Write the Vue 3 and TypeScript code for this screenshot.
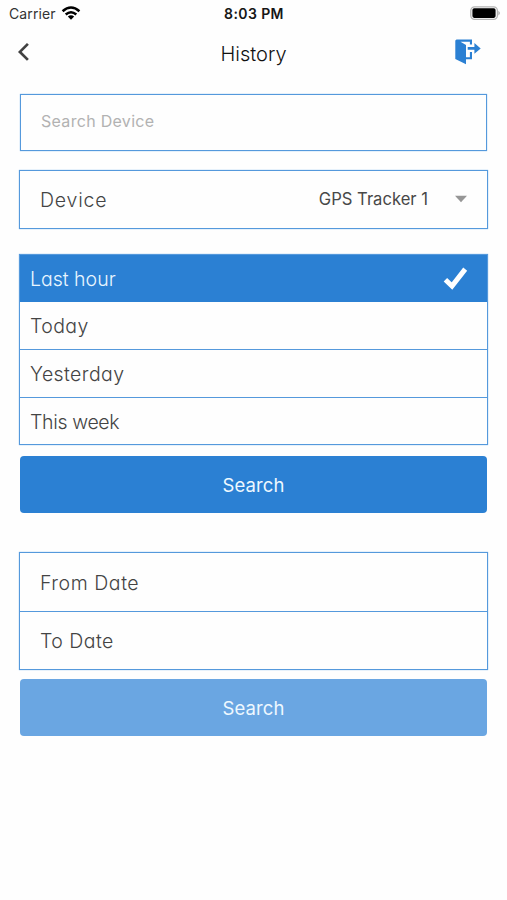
<script setup lang="ts">
import { ref } from 'vue'

interface Label {
  text: string
  tracking: number
}

const ranges: Label[] = [
  { text: 'Last hour', tracking: 0 },
  { text: 'Today', tracking: 0.4 },
  { text: 'Yesterday', tracking: 0.4 },
  { text: 'This week', tracking: -0.35 },
]
const dates: Label[] = [
  { text: 'From Date', tracking: 0.55 },
  { text: 'To Date', tracking: 0.45 },
]
const selected = ref(0)
</script>

<template>
  <main class="screen">
    <div class="status">
      <div class="carrier">
        <span>Carrier</span>
        <svg width="20" height="16" viewBox="0 0 20 16">
          <g fill="none" stroke="#000" stroke-width="2.5">
            <path d="M1.6 6.3 Q10 -1.2 18.4 6.3" />
            <path d="M4.7 9.5 Q10 4.9 15.3 9.5" />
          </g>
          <path d="M6.8 11.5 Q10 8.9 13.2 11.5 L10 14.7 Z" />
        </svg>
      </div>
      <span class="clock">8:03 PM</span>
      <svg class="battery" width="32" height="16" viewBox="0 0 32 16">
        <rect x="1.8" y="1.8" width="26.6" height="12.6" rx="3.8" fill="#fff" stroke="#b4b4b4" stroke-width="1.3" />
        <rect x="3.4" y="3.3" width="23.2" height="9.6" rx="1.8" fill="#000" />
        <path d="M29.4 5.7 Q32.4 8.1 29.4 10.5 Z" fill="#aaa" />
      </svg>
    </div>

    <header class="nav">
      <svg class="back" width="14" height="20" viewBox="0 0 14 20">
        <path d="M11.9 1.9 L3.9 9.9 L11.9 17.9" fill="none" stroke="#414141" stroke-width="2.7" />
      </svg>
      <h1>History</h1>
      <svg class="exit" width="28" height="28" viewBox="0 0 28 28">
        <path d="M1.3 2.6 L2.5 1.6 H18 V6.5 H15.9 V3.7 H6.5 L12 7 V19.3 H15.9 V14 H18 V21.3 H12 V26.2 L1.3 20.9 Z" fill="#2b80d3" />
        <path d="M13.7 9 H20.4 V5 L26.7 10.4 L20.4 15.8 V11.8 H13.7 Z" fill="#2b80d3" />
      </svg>
    </header>

    <div class="search-box"><span>Search Device</span></div>

    <div class="device-box">
      <span class="gothic">Device</span>
      <span class="value">GPS Tracker 1</span>
      <svg class="caret" width="12" height="8" viewBox="0 0 12 8"><path d="M0 .7 H12 L6 7.3 Z" fill="#969696" /></svg>
    </div>

    <ul class="ranges">
      <li v-for="(r, i) in ranges" :key="r.text" :class="{ active: i === selected }" @click="selected = i">
        <span class="gothic" :style="{ letterSpacing: r.tracking + 'px' }">{{ r.text }}</span>
        <svg v-if="i === selected" width="26" height="24" viewBox="0 0 26 24">
          <path d="M3.4 12.8 L10 19 L23.2 2.1" fill="none" stroke="#fff" stroke-width="5" />
        </svg>
      </li>
    </ul>

    <button class="search">Search</button>

    <div class="dates">
      <div v-for="d in dates" :key="d.text" class="date">
        <span class="gothic" :style="{ letterSpacing: d.tracking + 'px' }">{{ d.text }}</span>
      </div>
    </div>

    <button class="search pale">Search</button>
  </main>
</template>

<style>
body {
  background: #fefefe;
}
</style>

<style scoped>
.screen {
  width: 507px;
  height: 900px;
  box-sizing: border-box;
  overflow: hidden;
  background: #fefefe;
  color: #444;
  font-family: Inter, "Liberation Sans", sans-serif;
}
.status {
  display: grid;
  grid-template-columns: 1fr auto 1fr;
  align-items: center;
  height: 28px;
  padding: 0 6px 2px 9px;
  box-sizing: border-box;
  font-size: 14px;
  color: #333;
}
.carrier {
  display: flex;
  align-items: center;
  gap: 5px;
  letter-spacing: 0.1px;
}
.clock {
  font-weight: 600;
  color: #161616;
  letter-spacing: 0.4px;
  margin-left: -2px;
}
.battery {
  justify-self: end;
}
.nav {
  display: grid;
  grid-template-columns: 60px 1fr 60px;
  align-items: center;
  height: 50px;
  padding: 0 25px 0 16px;
}
h1 {
  margin: 1px 0 0 9px;
  font: 300 20px/30px Inter, sans-serif;
  text-align: center;
  color: #111;
}
.back {
  margin-top: -2px;
}
.exit {
  justify-self: end;
  margin-top: -3px;
}
.search-box,
.device-box,
.ranges,
.dates {
  box-sizing: border-box;
  border: 1px solid #5599dc;
  box-shadow: 0 0 1px #72afe9;
}
.search-box {
  height: 57px;
  margin: 16px 20px 0;
  padding: 0 20px;
  font-size: 16px;
  line-height: 52px;
  letter-spacing: 0.3px;
  color: #b2b2b2;
}
.device-box {
  height: 59px;
  margin: 19px 19px 0;
  padding: 0 20px;
  display: flex;
  align-items: center;
}
.gothic {
  font: 300 19.5px/28px Inter, sans-serif;
  font-feature-settings: "cv11" 1;
}
.device-box .gothic {
  letter-spacing: 0.8px;
  padding-top: 1px;
}
.value {
  margin: -2px 27px 0 auto;
  font-size: 16.6px;
  color: #484848;
}
.caret {
  margin-top: -2px;
}
.ranges {
  height: 191px;
  margin: 25px 19px 0;
  padding: 0;
  list-style: none;
  display: grid;
  grid-template-rows: 47px 48px 48px 46px;
}
.ranges li {
  box-sizing: border-box;
  display: flex;
  align-items: center;
  justify-content: space-between;
  padding: 0 19px 0 10px;
  border-bottom: 1px solid #5599dc;
}
.ranges li:last-child {
  border-bottom: 0;
  padding-top: 2px;
}
.ranges .active {
  padding-top: 2px;
  background: #2b80d3;
  border-color: #2b80d3;
  color: #e9f6ff;
}
.search {
  display: block;
  width: 467px;
  height: 57px;
  margin: 11px 20px 0;
  padding: 0;
  border: 0;
  border-radius: 4px;
  background: #2b80d3;
  color: #eef8ff;
  font: 400 18.5px/24px Inter, sans-serif;
  letter-spacing: 0.1px;
}
.dates {
  height: 118px;
  margin: 39px 19px 0;
  display: grid;
  grid-template-rows: 59px 57px;
}
.date {
  display: flex;
  align-items: center;
  box-sizing: border-box;
  padding: 1px 20px 0;
}
.date:first-child {
  border-bottom: 1px solid #5599dc;
}
.pale {
  margin-top: 9px;
  background: #6aa6e2;
}
</style>
